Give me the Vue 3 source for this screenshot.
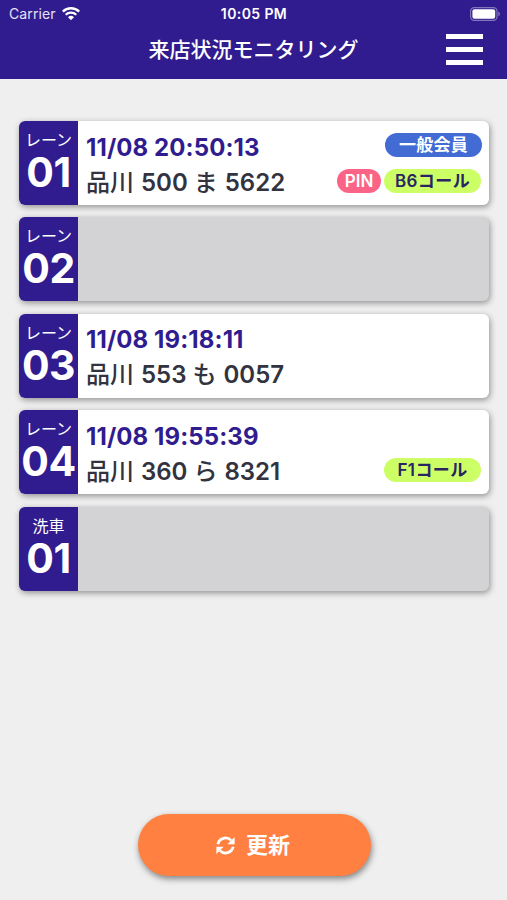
<script setup>
import { ref } from 'vue'

defineOptions({
  name: 'StoreMonitoring'
})

const lanes = ref([
  {
    id: 1,
    label: 'レーン',
    number: '01',
    visit: {
      time: '11/08 20:50:13',
      area: '品川',
      code: '500',
      kana: 'ま',
      plate: '5622',
      member: '一般会員',
      pin: true,
      call: 'B6コール'
    }
  },
  { id: 2, label: 'レーン', number: '02', visit: null },
  {
    id: 3,
    label: 'レーン',
    number: '03',
    visit: { time: '11/08 19:18:11', area: '品川', code: '553', kana: 'も', plate: '0057' }
  },
  {
    id: 4,
    label: 'レーン',
    number: '04',
    visit: {
      time: '11/08 19:55:39',
      area: '品川',
      code: '360',
      kana: 'ら',
      plate: '8321',
      call: 'F1コール'
    }
  },
  { id: 5, label: '洗車', number: '01', visit: null }
])
</script>

<template>
  <div class="screen">
    <header class="header">
      <div class="status-bar">
        <div class="status-left">
          <span>Carrier</span>
          <svg class="wifi" viewBox="0 0 18 13" fill="none" stroke="#fff">
            <path d="M.8 4.6a11.8 11.8 0 0 1 16.4 0" stroke-width="2.4" />
            <path d="M3.7 7.7a7.6 7.6 0 0 1 10.6 0" stroke-width="2.2" />
            <path d="M9 13.2 6 10.2a4.3 4.3 0 0 1 6 0z" fill="#fff" stroke="none" />
          </svg>
        </div>
        <span class="clock">10:05 PM</span>
        <div class="status-right">
          <svg class="battery" viewBox="0 0 31 14">
            <rect x="0.6" y="0.6" width="26.4" height="12.8" rx="3.6" fill="none" stroke="#fff" stroke-opacity="0.4" stroke-width="1.2" />
            <rect x="2.4" y="2.3" width="22.8" height="9.4" rx="2" fill="#fff" />
            <path d="M28.4 4.8c1.9.7 1.9 3.7 0 4.4z" fill="#fff" fill-opacity="0.45" />
          </svg>
        </div>
      </div>
      <div class="nav-bar">
        <h1 class="title">来店状況モニタリング</h1>
        <button class="menu-btn" type="button">
          <span class="menu-line"></span>
          <span class="menu-line"></span>
          <span class="menu-line"></span>
        </button>
      </div>
    </header>

    <main class="lane-list">
      <div v-for="lane in lanes" :key="lane.id" class="lane-card" :class="{ empty: !lane.visit }">
        <div class="lane-head">
          <span class="lane-label">{{ lane.label }}</span>
          <span class="lane-number">{{ lane.number }}</span>
        </div>
        <div v-if="lane.visit" class="lane-body">
          <div class="row">
            <span class="time">{{ lane.visit.time }}</span>
            <span v-if="lane.visit.member" class="badge member">{{ lane.visit.member }}</span>
          </div>
          <div class="row">
            <div class="plate">
              <span class="kanji">{{ lane.visit.area }}</span>
              <span>{{ lane.visit.code }}</span>
              <span class="kana">{{ lane.visit.kana }}</span>
              <span>{{ lane.visit.plate }}</span>
            </div>
            <div class="badges">
              <span v-if="lane.visit.pin" class="badge pin">PIN</span>
              <span v-if="lane.visit.call" class="badge call">{{ lane.visit.call }}</span>
            </div>
          </div>
        </div>
      </div>
    </main>

    <footer class="footer">
      <button class="refresh-btn" type="button">
        <svg class="refresh-icon" viewBox="0 0 20 20" fill="none">
          <path d="M2 8.6A8.1 8.1 0 0 1 15.8 4.6" stroke="#fff" stroke-width="3" />
          <path d="M18 11.4A8.1 8.1 0 0 1 4.2 15.4" stroke="#fff" stroke-width="3" />
          <path d="M19.6 1v7.6H12z" fill="#fff" />
          <path d="M.4 19v-7.6H8z" fill="#fff" />
        </svg>
        <span class="refresh-text">更新</span>
      </button>
    </footer>
  </div>
</template>

<style>
body {
  margin: 0;
  background-color: #efefef;
}
</style>

<style scoped>
.screen {
  display: flex;
  flex-direction: column;
  height: 900px;
  overflow: hidden;
  box-sizing: border-box;
  background-color: #efefef;
  font-family: Inter, 'Noto Sans CJK JP', sans-serif;
}

.header {
  height: 79px;
  background-color: #301c8e;
  color: #fff;
}

.status-bar {
  display: grid;
  grid-template-columns: 1fr auto 1fr;
  align-items: center;
  height: 27px;
  padding: 0 6px 0 9px;
  font-size: 14px;
  line-height: 27px;
}

.status-left {
  display: flex;
  align-items: center;
  gap: 6px;
  color: #e6e3f5;
  letter-spacing: 0.1px;
}

.wifi {
  width: 18px;
  height: 13px;
}

.clock {
  margin-right: 2px;
  font-size: 14px;
  font-weight: 600;
  letter-spacing: 0.4px;
}

.status-right {
  display: flex;
  justify-content: flex-end;
}

.battery {
  width: 31px;
  height: 14px;
}

.nav-bar {
  display: grid;
  grid-template-columns: 1fr auto 1fr;
  align-items: center;
  height: 46px;
  padding: 0 24px;
}

.title {
  grid-column: 2;
  margin: 0;
  font-size: 21px;
  font-weight: 500;
  line-height: 46px;
}

.menu-btn {
  display: flex;
  flex-direction: column;
  justify-self: end;
  gap: 8px;
  padding: 0 0 1px;
  border: none;
  background: none;
}

.menu-line {
  width: 37px;
  height: 5px;
  background-color: #fff;
}

.lane-list {
  display: flex;
  flex: 1;
  flex-direction: column;
  gap: 12.4px;
  padding: 42px 18px 0 19px;
}

.lane-card {
  display: flex;
  height: 84px;
  border-radius: 6px;
  background-color: #fff;
  box-shadow: 1px 2px 6px rgba(0, 0, 0, 0.4);
  overflow: hidden;
}

.lane-card.empty {
  background-color: #d3d3d5;
}

.lane-head {
  display: flex;
  flex-direction: column;
  align-items: center;
  width: 59px;
  padding-top: 10px;
  box-sizing: border-box;
  background-color: #301c8e;
  color: #fff;
}

.lane-label {
  font-size: 16px;
  font-weight: 400;
  line-height: 19px;
}

.lane-number {
  font-size: 41px;
  font-weight: 700;
  letter-spacing: -0.5px;
  line-height: 44px;
}

.lane-body {
  display: flex;
  flex: 1;
  flex-direction: column;
  padding: 7px 7px 0 8px;
}

.row {
  display: flex;
  align-items: center;
  justify-content: space-between;
  height: 35px;
}

.time {
  padding-top: 3px;
  color: #301c8e;
  font-size: 24px;
  font-weight: 700;
  font-kerning: none;
  letter-spacing: 0.1px;
}

.plate {
  display: flex;
  align-items: center;
  gap: 7px;
  padding-top: 3px;
  color: #32333f;
  font-size: 24px;
  font-weight: 600;
  line-height: 35px;
}

.kanji {
  font-weight: 500;
}

.kana {
  margin: 0 0 0 -1px;
  font-weight: 500;
}

.badges {
  display: flex;
  gap: 3px;
  padding-right: 1px;
}

.badge {
  height: 24px;
  box-sizing: border-box;
  border-radius: 12px;
  font-size: 17px;
  font-weight: 600;
  line-height: 24px;
  text-align: center;
}

.member {
  width: 97px;
  margin-bottom: 1px;
  background-color: #426cd3;
  color: #fff;
  letter-spacing: 0.3px;
}

.pin {
  width: 44px;
  background-color: #fb6487;
  color: #fff;
}

.call {
  width: 97px;
  background-color: #ccff66;
  color: #2a2463;
  letter-spacing: 0.4px;
}

.footer {
  display: flex;
  justify-content: center;
  padding: 0 0 24px 1px;
}

.refresh-btn {
  display: flex;
  align-items: center;
  justify-content: center;
  gap: 11px;
  width: 233px;
  height: 62px;
  padding: 0 8px 0 6px;
  border: none;
  border-radius: 31px;
  background-color: #ff8040;
  box-shadow: 1px 3px 6px rgba(0, 0, 0, 0.45);
  color: #fff;
  font-family: inherit;
  font-size: 22px;
  font-weight: 600;
}

.refresh-text {
  padding-bottom: 4px;
}

.refresh-icon {
  width: 19px;
  height: 19px;
}
</style>
